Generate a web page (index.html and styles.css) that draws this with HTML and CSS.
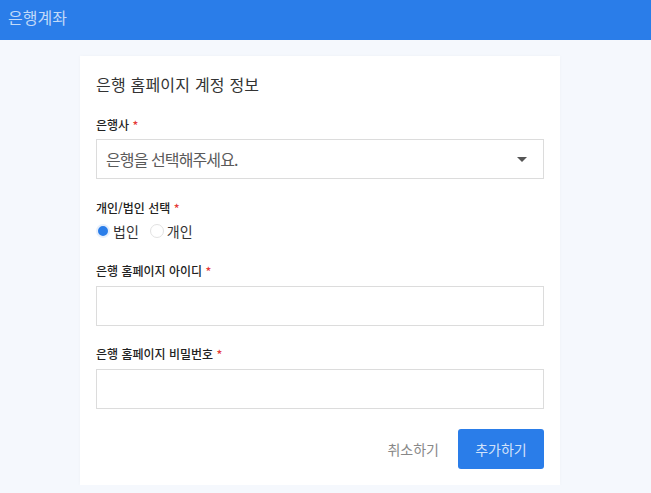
FILE: index.html
```html
<!DOCTYPE html>
<html lang="ko">

<head>
    <meta charset="UTF-8">
    <meta name="viewport" content="width=device-width, initial-scale=1.0">
    <title>은행계좌</title>
    <link rel="stylesheet" href="styles.css">
</head>

<body>
    <div class="app">
        <header class="topbar">은행계좌</header>
        <main class="content">
            <div class="card">
                <h2 class="card-title">은행 홈페이지 계정 정보</h2>

                <div class="field">
                    <label class="field-label">은행사 <span class="req">*</span></label>
                    <div class="select">
                        <span class="select-text">은행을 선택해주세요.</span>
                        <span class="select-arrow"></span>
                    </div>
                </div>

                <div class="field field-radio">
                    <label class="field-label">개인/법인 선택 <span class="req">*</span></label>
                    <div class="radios">
                        <label class="radio checked"><span class="dot"></span>법인</label>
                        <label class="radio"><span class="dot"></span>개인</label>
                    </div>
                </div>

                <div class="field field-id">
                    <label class="field-label">은행 홈페이지 아이디 <span class="req">*</span></label>
                    <input class="input" type="text">
                </div>

                <div class="field">
                    <label class="field-label">은행 홈페이지 비밀번호 <span class="req">*</span></label>
                    <input class="input" type="password">
                </div>

                <div class="actions">
                    <button class="btn btn-text">취소하기</button>
                    <button class="btn btn-primary">추가하기</button>
                </div>
            </div>
        </main>
    </div>
</body>

</html>
```

FILE: styles.css
```css
body {
    margin: 0px;
    font-family: "Noto Sans CJK KR", "Noto Sans", sans-serif;
    background-color: #f5f8fd;
    color: #333;
}

.topbar {
    height: 40px;
    padding: 0px 8px;
    line-height: 34px;
    font-size: 16px;
    color: rgba(255, 255, 255, 0.72);
    background-color: #2a7de9;
}

.content {
    display: flex;
    justify-content: center;
    padding-top: 16px;
}

.card {
    width: 448px;
    margin-left: -11px;
    padding: 16px 16px 16px;
    background-color: #fff;
    box-shadow: 0px 0px 4px rgba(0, 0, 0, 0.03);
}

.card-title {
    margin: 0px 0px 20px;
    font-size: 16px;
    font-weight: 400;
    line-height: 24px;
    letter-spacing: 0.2px;
    color: #333;
}

.field {
    margin-bottom: 20px;
}

.field-radio {
    margin-bottom: 21px;
}

.field-id {
    margin-bottom: 19px;
}

.field-label {
    display: block;
    margin-bottom: 6px;
    font-size: 12px;
    font-weight: 500;
    line-height: 18px;
    color: #222;
}

.req {
    color: #e53935;
}

.select {
    display: flex;
    align-items: center;
    justify-content: space-between;
    height: 38px;
    margin-top: -1px;
    padding: 0px 16px 0px 9px;
    border: 1px solid #dcdcdc;
}

.select-text {
    font-size: 16px;
    letter-spacing: -0.9px;
    color: #5a5a5a;
}

.select-arrow {
    width: 0px;
    height: 0px;
    border-left: 5px solid transparent;
    border-right: 5px solid transparent;
    border-top: 5px solid #555;
}

.radios {
    display: flex;
    gap: 11px;
    margin-top: -2px;
}

.radio {
    display: flex;
    align-items: center;
    gap: 3px;
    font-size: 14px;
    color: #333;
}

.radio .dot {
    box-sizing: border-box;
    width: 14px;
    height: 14px;
    border: 1px solid #e2e2e2;
    border-radius: 50%;
}

.radio.checked .dot {
    border: 2px solid #e6effc;
    background-color: #2a7de9;
}

.input {
    display: block;
    box-sizing: border-box;
    width: 100%;
    height: 40px;
    margin: 0px;
    border: 1px solid #dcdcdc;
    outline: none;
}

.actions {
    display: flex;
    justify-content: flex-end;
    margin-top: 19px;
}

.btn {
    height: 40px;
    padding: 0px 19px 0px 16px;
    border: none;
    border-radius: 3px;
    font-family: inherit;
    font-size: 14px;
}

.btn-text {
    color: #888;
    background: none;
}

.btn-primary {
    width: 86px;
    padding: 0px;
    color: rgba(255, 255, 255, 0.8);
    background-color: #2a7de9;
}
```
